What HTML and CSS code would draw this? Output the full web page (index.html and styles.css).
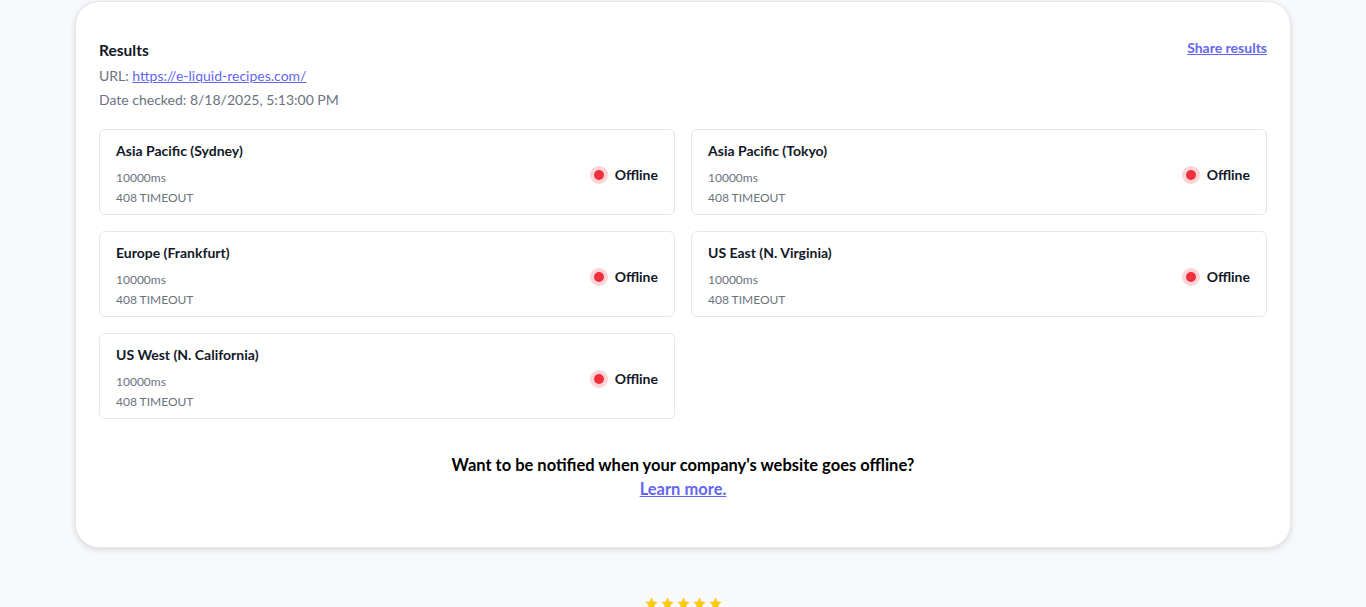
FILE: index.html
```html
<!DOCTYPE html>
<html lang="en">
<head>
<meta charset="utf-8">
<link rel="stylesheet" href="styles.css">
<title>Results</title>
</head>
<body>
<main class="page">
  <section class="card">
    <div class="card-head">
      <div class="info">
        <h2 class="title">Results</h2>
        <p class="meta">URL: <a href="#" class="link">https://e-liquid-recipes.com/</a></p>
        <p class="meta">Date checked: 8/18/2025, 5:13:00 PM</p>
      </div>
      <a href="#" class="share">Share results</a>
    </div>
    <div class="grid">
      <div class="region">
        <div class="region-info">
          <div class="region-name">Asia Pacific (Sydney)</div>
          <div class="region-line first">10000ms</div>
          <div class="region-line">408 TIMEOUT</div>
        </div>
        <div class="status"><span class="dot"></span>Offline</div>
      </div>
      <div class="region">
        <div class="region-info">
          <div class="region-name">Asia Pacific (Tokyo)</div>
          <div class="region-line first">10000ms</div>
          <div class="region-line">408 TIMEOUT</div>
        </div>
        <div class="status"><span class="dot"></span>Offline</div>
      </div>
      <div class="region">
        <div class="region-info">
          <div class="region-name">Europe (Frankfurt)</div>
          <div class="region-line first">10000ms</div>
          <div class="region-line">408 TIMEOUT</div>
        </div>
        <div class="status"><span class="dot"></span>Offline</div>
      </div>
      <div class="region">
        <div class="region-info">
          <div class="region-name">US East (N. Virginia)</div>
          <div class="region-line first">10000ms</div>
          <div class="region-line">408 TIMEOUT</div>
        </div>
        <div class="status"><span class="dot"></span>Offline</div>
      </div>
      <div class="region">
        <div class="region-info">
          <div class="region-name">US West (N. California)</div>
          <div class="region-line first">10000ms</div>
          <div class="region-line">408 TIMEOUT</div>
        </div>
        <div class="status"><span class="dot"></span>Offline</div>
      </div>
    </div>
    <div class="notify">
      <p class="notify-text">Want to be notified when your company's website goes offline?</p>
      <a href="#" class="notify-link">Learn more.</a>
    </div>
  </section>
  <div class="stars">
    <svg viewBox="0 0 24 24" class="star"><path d="M12 2l2.9 6.9 7.1.6-5.4 4.7 1.7 7.3L12 17.6 5.7 21.5l1.7-7.3L2 9.5l7.1-.6z"/></svg>
    <svg viewBox="0 0 24 24" class="star"><path d="M12 2l2.9 6.9 7.1.6-5.4 4.7 1.7 7.3L12 17.6 5.7 21.5l1.7-7.3L2 9.5l7.1-.6z"/></svg>
    <svg viewBox="0 0 24 24" class="star"><path d="M12 2l2.9 6.9 7.1.6-5.4 4.7 1.7 7.3L12 17.6 5.7 21.5l1.7-7.3L2 9.5l7.1-.6z"/></svg>
    <svg viewBox="0 0 24 24" class="star"><path d="M12 2l2.9 6.9 7.1.6-5.4 4.7 1.7 7.3L12 17.6 5.7 21.5l1.7-7.3L2 9.5l7.1-.6z"/></svg>
    <svg viewBox="0 0 24 24" class="star"><path d="M12 2l2.9 6.9 7.1.6-5.4 4.7 1.7 7.3L12 17.6 5.7 21.5l1.7-7.3L2 9.5l7.1-.6z"/></svg>
  </div>
</main>
</body>
</html>
```

FILE: styles.css
```css
* { box-sizing: border-box; }
html, body { margin: 0; padding: 0; }
body {
  background: #f8f9fb;
  font-family: Lato, "Noto Sans", "Liberation Sans", sans-serif;
  color: #111827;
}
.page {
  width: 1216px;
  margin: 0 auto;
  padding-top: 1px;
}
.card {
  background: #fff;
  border: 1px solid #e5e7eb;
  border-radius: 24px;
  box-shadow: 0 2px 6px rgba(0,0,0,0.13);
  padding: 36px 23px 46px;
}
.card-head {
  display: flex;
  justify-content: space-between;
  align-items: flex-start;
}
.title {
  margin: 0 0 2px;
  font-size: 15.5px;
  font-weight: 700;
  line-height: 24px;
  color: #111827;
}
.meta {
  margin: 0;
  font-size: 14px;
  line-height: 24px;
  color: #6b7280;
}
.link { color: #6366f1; text-decoration: underline; }
.share {
  font-size: 14px;
  font-weight: 700;
  color: #6366f1;
  text-decoration: underline;
  line-height: 24px;
  margin-top: -2px;
}
.grid {
  display: grid;
  grid-template-columns: 1fr 1fr;
  gap: 16px;
  margin-top: 17px;
}
.region {
  border: 1px solid #e5e7eb;
  border-radius: 6px;
  padding: 11px 16px 6px;
  display: flex;
  justify-content: space-between;
  align-items: center;
}
.region-name {
  font-size: 14px;
  font-weight: 700;
  line-height: 20px;
  color: #111827;
}
.region-line {
  font-size: 12px;
  line-height: 20px;
  color: #6b7280;
}
.region-line.first { margin-top: 7px; }
.status {
  display: flex;
  align-items: center;
  gap: 7px;
  font-size: 14px;
  font-weight: 700;
  color: #111827;
  margin-top: 0;
}
.dot {
  width: 10px;
  height: 10px;
  border-radius: 50%;
  background: #ef2f3c;
  box-shadow: 0 0 0 4px #fdd5d8;
  margin-right: 4px;
}
.notify {
  text-align: center;
  margin-top: 34px;
}
.notify-text {
  margin: 0;
  font-size: 16.5px;
  font-weight: 700;
  line-height: 24px;
  color: #000;
}
.notify-link {
  font-size: 16.5px;
  font-weight: 700;
  line-height: 24px;
  color: #6366f1;
  text-decoration: underline;
}
.stars {
  display: flex;
  justify-content: center;
  gap: 1px;
  margin-top: 48px;
}
.star {
  width: 15px;
  height: 15px;
  fill: #facc15;
}
```
